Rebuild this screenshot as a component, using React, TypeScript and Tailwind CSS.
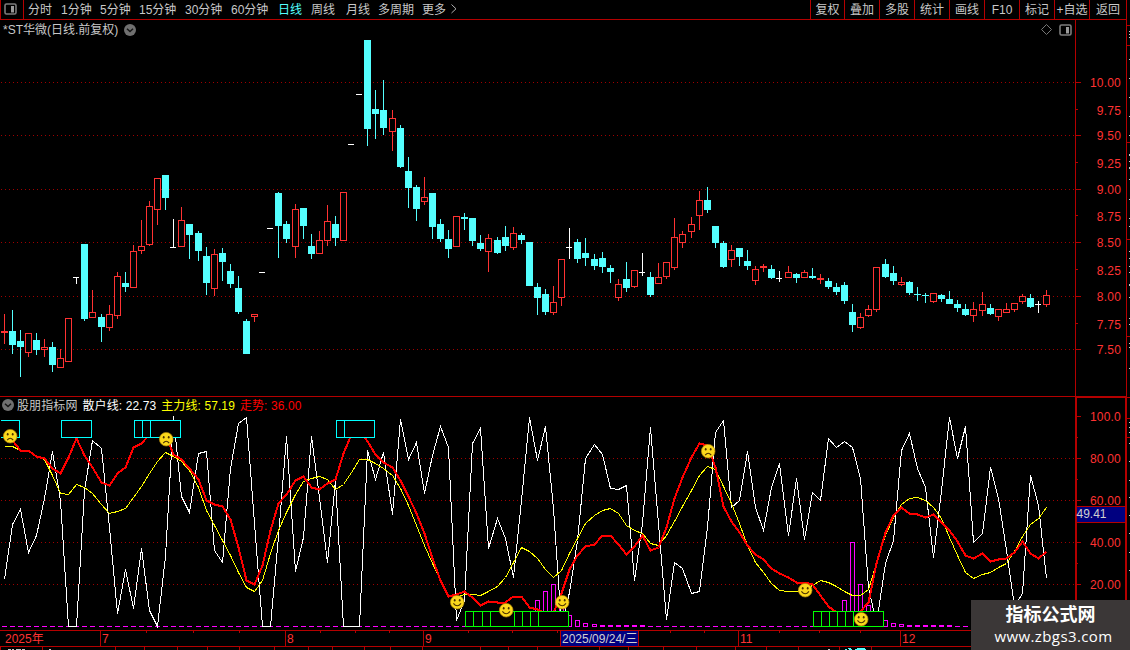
import clsx from "clsx";

type Candle = [kind: string, high: number, top: number, bottom: number, low: number];

// r = rising (hollow), c = falling (filled), w = unchanged (cross or dash)
const candles: Candle[] = [
  ["r", 314, 331, 333, 344], ["c", 310, 331, 345, 354], ["c", 330, 341, 347, 377], ["r", 333, 333, 353, 357],
  ["c", 333, 340, 350, 355], ["r", 339, 347, 350, 357], ["c", 342, 347, 365, 372], ["r", 349, 358, 368, 368],
  ["r", 318, 318, 362, 362], ["w", 277, 277, 278, 284], ["c", 244, 244, 319, 321], ["r", 290, 312, 318, 318],
  ["c", 314, 317, 327, 342], ["r", 305, 314, 328, 331], ["r", 272, 276, 316, 319], ["c", 272, 283, 287, 292],
  ["r", 245, 251, 288, 288], ["r", 220, 246, 251, 254], ["r", 201, 206, 245, 246], ["r", 178, 178, 210, 225],
  ["c", 175, 175, 198, 210], ["w", 219, 247, 248, 248], ["r", 207, 220, 247, 247], ["c", 224, 224, 235, 259],
  ["c", 231, 233, 251, 261], ["c", 247, 256, 283, 295], ["r", 249, 254, 289, 296], ["c", 248, 253, 262, 281],
  ["c", 264, 271, 284, 288], ["c", 276, 288, 312, 314], ["c", 319, 321, 354, 354], ["r", 314, 314, 317, 322],
  ["w", 272, 272, 273, 273], ["w", 228, 228, 229, 229], ["c", 192, 193, 226, 258], ["c", 221, 224, 239, 243],
  ["r", 204, 209, 247, 258], ["c", 208, 208, 226, 239], ["c", 234, 246, 254, 259], ["r", 231, 240, 254, 254],
  ["r", 205, 221, 241, 246], ["c", 216, 224, 238, 246], ["r", 192, 192, 241, 241], ["w", 144, 144, 145, 145],
  ["w", 94, 94, 95, 95], ["c", 40, 40, 129, 146], ["c", 90, 109, 114, 139], ["c", 80, 110, 128, 135],
  ["r", 110, 118, 132, 151], ["c", 125, 128, 167, 168], ["c", 157, 171, 188, 208], ["c", 185, 187, 209, 221],
  ["r", 177, 197, 202, 205], ["c", 193, 193, 227, 239], ["c", 219, 224, 239, 242], ["c", 230, 239, 249, 258],
  ["r", 216, 216, 247, 247], ["c", 213, 217, 219, 230], ["c", 218, 218, 241, 246], ["c", 235, 243, 249, 251],
  ["r", 234, 238, 252, 272], ["c", 237, 240, 253, 254], ["c", 226, 237, 246, 251], ["r", 227, 233, 248, 250],
  ["c", 233, 235, 240, 244], ["c", 242, 242, 286, 286], ["c", 283, 287, 298, 315], ["c", 289, 294, 312, 315],
  ["r", 286, 302, 313, 315], ["r", 259, 259, 298, 306], ["w", 228, 247, 248, 259], ["c", 239, 242, 259, 263],
  ["c", 238, 253, 258, 266], ["c", 254, 259, 266, 270], ["c", 252, 258, 267, 273], ["c", 265, 268, 272, 283],
  ["r", 279, 284, 298, 301], ["c", 262, 279, 288, 292], ["r", 270, 270, 287, 288], ["w", 253, 272, 273, 276],
  ["c", 272, 277, 295, 297], ["r", 263, 277, 284, 284], ["r", 262, 262, 277, 279], ["r", 218, 237, 268, 270],
  ["r", 231, 234, 243, 248], ["r", 217, 224, 232, 238], ["r", 191, 200, 216, 230], ["c", 187, 200, 210, 213],
  ["c", 226, 226, 243, 248], ["c", 241, 243, 267, 268], ["r", 245, 250, 260, 267], ["c", 248, 248, 257, 266],
  ["c", 250, 261, 266, 270], ["r", 266, 269, 281, 285], ["r", 264, 266, 268, 272], ["c", 265, 269, 278, 279],
  ["w", 271, 278, 279, 282], ["r", 266, 272, 278, 278], ["c", 273, 274, 278, 283], ["r", 270, 272, 278, 278],
  ["c", 268, 276, 278, 279], ["r", 274, 278, 280, 284], ["c", 278, 281, 287, 289], ["c", 283, 287, 292, 295],
  ["c", 282, 285, 301, 304], ["c", 304, 312, 325, 332], ["r", 313, 317, 328, 329], ["r", 305, 309, 316, 317],
  ["r", 267, 267, 310, 312], ["c", 259, 264, 277, 278], ["c", 266, 273, 281, 285], ["r", 277, 282, 285, 286],
  ["c", 281, 282, 293, 295], ["c", 287, 294, 295, 301], ["c", 293, 295, 296, 303], ["r", 293, 293, 302, 303],
  ["c", 294, 295, 299, 302], ["c", 291, 299, 304, 304], ["c", 300, 304, 308, 312], ["c", 304, 309, 315, 316],
  ["r", 302, 309, 316, 322], ["r", 292, 304, 311, 316], ["c", 304, 308, 314, 315], ["r", 309, 309, 317, 321],
  ["r", 303, 309, 313, 313], ["r", 303, 303, 310, 312], ["r", 294, 296, 302, 304], ["c", 294, 298, 307, 308],
  ["w", 301, 304, 305, 313], ["r", 290, 295, 305, 307],
];

// 散户线
const retail = [
  579, 524, 509, 552, 535, 498, 451, 500, 626, 626, 490, 440, 448, 527, 613, 569, 608, 548, 610, 626, 556, 416, 496,
  512, 453, 451, 550, 562, 468, 423, 417, 523, 626, 626, 536, 436, 571, 537, 436, 497, 562, 480, 626, 626, 626, 450,
  479, 452, 514, 419, 459, 442, 493, 455, 426, 447, 620, 600, 443, 428, 548, 518, 538, 577, 500, 417, 460, 426, 508,
  626, 592, 540, 458, 444, 454, 488, 489, 485, 580, 523, 427, 523, 619, 562, 568, 593, 591, 527, 432, 420, 507, 500,
  451, 507, 530, 487, 463, 535, 478, 539, 492, 500, 438, 447, 441, 447, 478, 587, 623, 563, 540, 450, 433, 468, 487,
  557, 490, 417, 458, 426, 542, 533, 467, 498, 550, 606, 593, 475, 505, 578,
];

// 主力线
const main = [
  446, 446, 450, 450, 456, 459, 475, 493, 494, 484, 487, 493, 504, 513, 511, 508, 497, 486, 473, 461, 452, 456, 461,
  470, 487, 510, 525, 540, 555, 572, 587, 591, 580, 553, 530, 512, 494, 481, 478, 476, 479, 489, 484, 472, 459, 459,
  463, 468, 475, 488, 505, 525, 545, 563, 580, 595, 597, 594, 594, 595, 591, 586, 577, 562, 547, 551, 558, 569, 577,
  570, 553, 538, 523, 515, 510, 508, 513, 525, 530, 533, 543, 545, 535, 521, 506, 490, 475, 466, 469, 486, 503, 523,
  545, 562, 572, 583, 590, 591, 591, 589, 585, 580, 582, 586, 591, 595, 595, 589, 563, 535, 517, 504, 498, 497, 500,
  507, 518, 537, 555, 572, 578, 574, 572, 567, 563, 551, 536, 524, 518, 507,
];

// 走势
const trend = [
  434, 440, 450, 450, 456, 458, 468, 473, 457, 438, 455, 467, 482, 485, 473, 467, 447, 443, 434, 430, 434, 454, 459,
  468, 479, 500, 504, 506, 519, 547, 580, 584, 565, 530, 503, 494, 480, 476, 487, 489, 483, 479, 453, 434, 428, 441,
  454, 462, 467, 480, 496, 513, 533, 558, 580, 596, 594, 591, 597, 605, 601, 602, 602, 596, 596, 607, 609, 613, 612,
  593, 569, 555, 546, 544, 535, 535, 544, 554, 546, 535, 550, 547, 527, 498, 477, 457, 443, 445, 467, 506, 521, 532,
  545, 554, 559, 568, 573, 577, 582, 582, 584, 595, 606, 612, 614, 614, 611, 602, 563, 532, 515, 507, 513, 514, 517,
  514, 522, 530, 541, 555, 558, 553, 561, 559, 558, 552, 541, 553, 558, 551,
];

const periods = [
  { label: "分时", width: "w-[33px]" },
  { label: "1分钟", width: "w-[39px]" },
  { label: "5分钟", width: "w-[39px]" },
  { label: "15分钟", width: "w-[46px]" },
  { label: "30分钟", width: "w-[46px]" },
  { label: "60分钟", width: "w-[47px]" },
  { label: "日线", width: "w-[33px]", active: true },
  { label: "周线", width: "w-[35px]" },
  { label: "月线", width: "w-[32px]" },
  { label: "多周期", width: "w-[44px]" },
  { label: "更多", width: "w-[28px]" },
];

const actions = [
  { label: "复权", width: "w-[34px]" },
  { label: "叠加", width: "w-[35px]" },
  { label: "多股", width: "w-[35px]" },
  { label: "统计", width: "w-[35px]" },
  { label: "画线", width: "w-[35px]" },
  { label: "F10", width: "w-[35px]" },
  { label: "标记", width: "w-[35px]" },
  { label: "+自选", width: "w-[35px]" },
  { label: "返回", width: "w-[37px]" },
];

const priceLabels: [string, number][] = [
  ["10.00", 82], ["9.75", 109], ["9.50", 135], ["9.25", 162], ["9.00", 189], ["8.75", 215],
  ["8.50", 242], ["8.25", 269], ["8.00", 296], ["7.75", 323], ["7.50", 349],
];

const levelLabels: [string, number][] = [
  ["100.0", 416], ["80.00", 458], ["60.00", 500], ["40.00", 542], ["20.00", 584],
];

const months = [
  { label: "2025年", width: "w-[100px]", pad: "pl-[5px]" },
  { label: "7", width: "w-[185px]", pad: "border-l pl-px" },
  { label: "8", width: "w-[138px]", pad: "border-l pl-px" },
  { label: "9", width: "w-[137px]", pad: "border-l pl-px" },
  { label: "2025/09/24/三", width: "w-[79px]", pad: "border-x pl-px bg-[#000080] text-[#d0d0d0]" },
  { label: "", width: "w-[99px]", pad: "" },
  { label: "11", width: "w-[162px]", pad: "border-l pl-px" },
  { label: "12", width: "w-[175px]", pad: "border-l pl-px" },
];

const weekTicks = [146, 193, 239, 320, 355, 389, 468, 512, 557, 670, 704, 779, 819, 860];
const bottomTicks = [
  0, 42, 115, 144, 177, 207, 239, 274, 308, 332, 364, 390, 422, 480, 508, 537, 599, 628, 663, 696, 735, 766, 798,
  839, 871,
];

// Histogram bars: left, top, right
const bars = [
  [535, 600, 539], [543, 591, 547], [551, 584, 555], [559, 602, 563], [567, 615, 571], [575, 620, 579],
  [583, 623, 587], [592, 624, 596], [842, 600, 846], [850, 542, 854], [858, 584, 862], [866, 605, 870],
  [883, 620, 887], [891, 623, 895], [899, 624, 903],
];

const faces = [
  { x: 10, y: 436, sad: true },
  { x: 166, y: 439, sad: true },
  { x: 457, y: 602 },
  { x: 506, y: 610 },
  { x: 562, y: 602 },
  { x: 708, y: 451, sad: true },
  { x: 805, y: 590 },
  { x: 861, y: 619 },
];

const xAt = (i: number) => Math.floor(4.045 + 8.0825 * i);
const toPoints = (ys: number[]) => ys.map((y, i) => `${xAt(i) + 0.5},${y + 0.5}`).join(" ");

const PanelIcon = () => (
  <svg width="13" height="12" viewBox="0 0 13 12">
    <rect x="1" y="1" width="11" height="10" rx="1.5" fill="none" stroke="#7c7c7c" strokeWidth="1.6" />
    <rect x="7" y="3" width="3" height="6.5" fill="#9a9a9a" />
  </svg>
);

const ChevronBadge = () => (
  <svg width="12" height="12" viewBox="0 0 12 12" className="mb-px shrink-0">
    <circle cx="6" cy="6" r="6" fill="#707070" />
    <path d="M3 4.7 6 7.5 9 4.7" fill="none" stroke="#161616" strokeWidth="1.5" />
  </svg>
);

const Face = ({ x, y, sad }: { x: number; y: number; sad?: boolean }) => (
  <g transform={`translate(${x + 0.2} ${y + 0.2})`}>
    <circle r="6.8" fill="#fbd81c" stroke="#b88a08" strokeWidth="0.7" />
    <ellipse cx="-2.5" cy="-2" rx="0.9" ry="1.2" fill="#4a3000" />
    <ellipse cx="2.5" cy="-2" rx="0.9" ry="1.2" fill="#4a3000" />
    <path
      d={sad ? "M-3 4Q0 0 3 4" : "M-3.8 1.2Q0 6 3.8 1.2"}
      fill="none"
      stroke="#4a3000"
      strokeWidth="1.1"
    />
  </g>
);

const CandleMark = ({ data, x }: { data: Candle; x: number }) => {
  const [kind, high, top, bottom, low] = data;
  if (kind === "w") {
    return (
      <g fill="#ffffff">
        <rect x={x - 3} y={top} width="6" height="1" />
        <rect x={x} y={high} width="1" height={low - high} />
      </g>
    );
  }
  if (kind === "c") {
    return (
      <g fill="#54ffff">
        <rect x={x} y={high} width="1" height={low - high} />
        <rect x={x - 3} y={top} width="7" height={bottom - top} />
      </g>
    );
  }
  return (
    <g fill="#ff3232">
      <rect x={x} y={high} width="1" height={top - high} />
      <rect x={x} y={bottom} width="1" height={low - bottom} />
      <rect x={x - 3} y={top} width="7" height={bottom - top} />
      {bottom - top > 2 && <rect x={x - 2} y={top + 1} width="5" height={bottom - top - 2} fill="#000000" />}
    </g>
  );
};

const GridLines = ({ levels }: { levels: number[] }) => (
  <g stroke="#a00000" strokeDasharray="1 3">
    {levels.map((y) => (
      <line key={y} x1="1" x2="1075" y1={y + 0.5} y2={y + 0.5} />
    ))}
  </g>
);

const PriceChart = () => (
  <svg width="1075" height="356" viewBox="0 40 1075 356" shapeRendering="crispEdges" className="block">
    <GridLines levels={[82, 135, 189, 242, 296, 349]} />
    {candles.map((c, i) => (
      <CandleMark key={i} data={c} x={xAt(i)} />
    ))}
  </svg>
);

const IndicatorChart = () => (
  <svg width="1075" height="216" viewBox="0 414 1075 216" shapeRendering="crispEdges" className="block">
    <GridLines levels={[458, 500, 542, 584]} />
    <g fill="#ff00ff">
      {candles.map((_, i) => {
        const thick = (i >= 74 && i <= 79) || (i >= 112 && i <= 117);
        return <rect key={i} x={xAt(i) - 2} y={thick ? 625 : 626} width="5" height={thick ? 2 : 1} />;
      })}
    </g>
    <g fill="#000000" stroke="#ff00ff">
      {bars.map(([x1, y, x2]) => (
        <rect key={x1} x={x1 + 0.5} y={y + 0.5} width={x2 - x1} height={626 - y} />
      ))}
    </g>
    <g fill="none">
      <polyline points={toPoints(retail)} stroke="#ffffff" />
      <polyline points={toPoints(main)} stroke="#ffff00" />
      <polyline points={toPoints(trend)} stroke="#ff0000" strokeWidth="2" />
    </g>
    <g fill="#000000" stroke="#00ffff">
      <path d="M1 420.5H19.5V437.5H1" />
      <rect x="61.5" y="420.5" width="30" height="17" />
      <path d="M134.5 420.5H180.5V437.5H134.5ZM142.5 420V437M150.5 420V437" />
      <path d="M336.5 420.5H374.5V437.5H336.5ZM344.5 420V437" />
    </g>
    <g fill="#000000" stroke="#00ff00">
      <path d="M465.5 611.5H568.5V626.5H465.5ZM473.5 611V626M482.5 611V626M490.5 611V626M514.5 611V626M522.5 611V626M530.5 611V626M538.5 611V626" />
      <path d="M813.5 611.5H883.5V626.5H813.5ZM821.5 611V626M829.5 611V626M837.5 611V626M845.5 611V626M853.5 611V626" />
    </g>
    <g shapeRendering="geometricPrecision">
      {faces.map((f) => (
        <Face key={f.x} {...f} />
      ))}
    </g>
  </svg>
);

const PriceAxis = () => (
  <svg width="51" height="376" viewBox="1075 20 51 376" className="block text-[12px]">
    <g fill="#b40000" shapeRendering="crispEdges">
      <rect x="1075" y="20" width="1" height="376" />
      {priceLabels.map(([label, y], i) => (
        <rect key={label} x="1075" y={y} width={i % 2 ? 3 : 6} height="1" />
      ))}
    </g>
    <g fill="#ff3232" textAnchor="end">
      {priceLabels.map(([label, y], i) => (
        <text key={label} x="1121" y={y + (i % 2 ? 6 : 5)} letterSpacing="0.2">
          {label}
        </text>
      ))}
    </g>
  </svg>
);

const LevelAxis = () => (
  <svg width="51" height="233" viewBox="1075 397 51 233" className="block text-[12px]">
    <g fill="#b40000" shapeRendering="crispEdges">
      <rect x="1075" y="397" width="2" height="233" />
      <rect x="1075" y="397" width="51" height="1" />
      <rect x="1125" y="397" width="1" height="233" />
      {levelLabels.map(([label, y]) => (
        <rect key={label} x="1075" y={y} width="6" height="1" />
      ))}
      {[437, 479, 521, 563].map((y) => (
        <rect key={y} x="1075" y={y} width="3" height="1" />
      ))}
    </g>
    <g fill="#ff3232" textAnchor="end">
      {levelLabels.map(([label, y]) => (
        <text key={label} x="1121" y={y + 5} letterSpacing="0.2">
          {label}
        </text>
      ))}
    </g>
    <rect x="1077" y="506" width="48" height="17" fill="#b40000" />
    <rect x="1077" y="507" width="48" height="15" fill="#000080" />
    <text x="1076.5" y="518" fill="#d0d0d0">
      49.41
    </text>
  </svg>
);

const TopBar = () => (
  <header className="flex h-5 border-b border-[#b40000] text-[#c8c8c8]">
    <div className="flex w-6 border-x border-[#b40000] pl-[3px] pt-[3px]">
      <PanelIcon />
    </div>
    <nav className="flex pl-1 leading-[20px]">
      {periods.map((p) => (
        <span key={p.label} className={clsx("shrink-0", p.width, p.active && "text-[#54ffff]")}>
          {p.label}
        </span>
      ))}
      <svg width="8" height="12" viewBox="0 0 8 12" className="mt-[3px]">
        <path d="M1.5 1.5 6 5.8 1.5 10" fill="none" stroke="#b0b0b0" />
      </svg>
    </nav>
    <div className="ml-auto flex leading-[20px]">
      {actions.map((a) => (
        <span key={a.label} className={clsx("h-[19px] border-l border-[#b40000] text-center", a.width)}>
          {a.label}
        </span>
      ))}
    </div>
  </header>
);

const DateBar = () => (
  <footer className="h-5 text-[#ff3232]">
    <div className="relative flex h-[17px] border-y border-[#b40000] leading-[17px]">
      {months.map((m, i) => (
        <span key={i} className={clsx("h-[15px] shrink-0 border-[#b40000]", m.width, m.pad)}>
          {m.label}
        </span>
      ))}
      <svg width="1075" height="3" className="absolute left-0 top-0" fill="#b40000">
        {weekTicks.map((x) => (
          <rect key={x} x={x} y="0" width="1" height="2" />
        ))}
      </svg>
    </div>
    <svg width="1075" height="3" className="block" shapeRendering="crispEdges">
      {bottomTicks.map((x) => (
        <rect key={x} x={x} y="0" width="1" height="3" fill="#b40000" />
      ))}
      <path d="M8 2.5h3m1 0h2m2 0h5m1 0h3m24 0h2M828 2.5h2" stroke="#c8c8c8" />
      <path d="M845 2.5h2m2 0h3m3 0h11M848 1.5h3m6 0h8" stroke="#54ffff" />
    </svg>
  </footer>
);

// Left edge of the quote panel that runs past the window
const SideEdge = () => (
  <svg width="4" height="650" viewBox="0 0 4 650" shapeRendering="crispEdges" className="block shrink-0">
    <g fill="#b40000">
      <rect width="1" height="650" />
      {[25, 45, 142, 239, 336, 397, 418, 437].map((y) => (
        <rect key={y} x="0" y={y} width="4" height="1" />
      ))}
    </g>
    <path
      d="M3.5 31v1m0 2v1m0 2v1M3.5 59v1m0 18v1m0 18v1m0 18v1m0 18v1M3.5 154v2m0 5v1m0 5v2m0 10v1m0 19v1m0 18v1m0 7v1M3.5 251v1m0 6v1m0 7v1m0 5v1m0 11v2m0 11v1m0 20v1m0 5v1M3.5 343v1m0 3v1m0 20v1M3.5 422v1m0 4v1m0 4v1M3.5 443v1m0 17v1m0 18v1m0 16v1m0 17v1m0 17v1m0 18v1m0 17v1"
      stroke="#c8c8c8"
    />
  </svg>
);

const App = () => {
  return (
    <div className="relative flex h-[650px] w-[1130px] overflow-hidden whitespace-nowrap bg-black font-['Liberation_Sans','Noto_Sans_CJK_SC',sans-serif] text-[12px]">
      <div className="w-[1126px] shrink-0">
        <TopBar />
        <section className="flex h-[376px]">
          <div className="w-[1075px]">
            <div className="flex h-5 items-center pl-[3px] text-[#c8c8c8]">
              <span className="mr-[6px] leading-[18px]">*ST华微(日线.前复权)</span>
              <ChevronBadge />
              <div className="mb-px ml-auto flex items-center gap-[7px] pr-[3px]">
                <svg width="11" height="11" viewBox="0 0 11 11">
                  <path d="M5.5.5 10.5 5.5 5.5 10.5.5 5.5Z" fill="none" stroke="#777777" />
                </svg>
                <PanelIcon />
              </div>
            </div>
            <PriceChart />
          </div>
          <PriceAxis />
        </section>
        <section className="flex h-[234px] border-t border-[#b40000]">
          <div className="w-[1075px]">
            <div className="flex h-[17px] items-center pl-[2px] leading-[16px] tracking-[0.1px]">
              <ChevronBadge />
              <span className="ml-[3px] text-[#c8c8c8]">股朋指标网</span>
              <span className="ml-[5px] text-white">散户线: 22.73</span>
              <span className="ml-[5px] text-[#ffff00]">主力线: 57.19</span>
              <span className="ml-[5px] text-[#ff0000]">走势: 36.00</span>
            </div>
            <IndicatorChart />
          </div>
          <LevelAxis />
        </section>
        <DateBar />
      </div>
      <SideEdge />
      <div className="absolute bottom-0 right-0 flex h-[50px] w-[159px] flex-col items-center bg-[#3b3737] text-white">
        <span className="mt-[3px] text-[18px] font-bold leading-[24px]">指标公式网</span>
        <span className="pl-[6px] font-['Open_Sans',sans-serif] text-[15px] leading-[18px] tracking-[0.4px]">
          www.zbgs3.com
        </span>
      </div>
    </div>
  );
};

export default App;
